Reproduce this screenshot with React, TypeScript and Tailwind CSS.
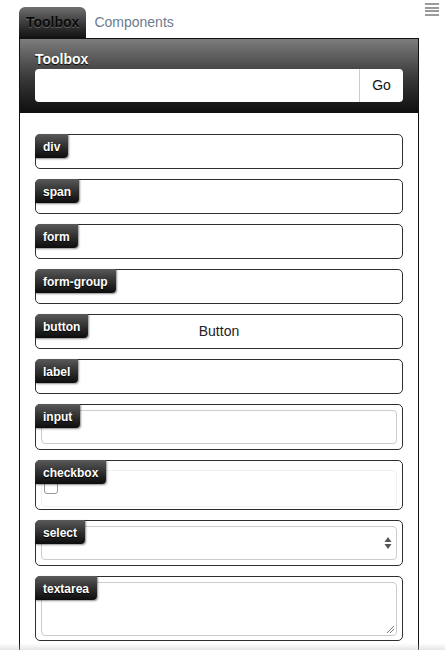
import type { ReactNode } from 'react'

const font = { fontFamily: '"Liberation Sans", Arial, sans-serif' }

function Badge({ children }: { children: ReactNode }) {
  return (
    <div className="absolute -left-px -top-px z-10 h-[24px] px-[8px] pt-[2px] rounded-tl-[5px] rounded-br-[4px] bg-gradient-to-b from-[#5a5a5a] to-[#0d0d0d] text-white text-[12px] font-bold leading-[22px] shadow-[1px_1px_2px_rgba(0,0,0,0.45)] [text-shadow:0_1px_1px_#000]">
      {children}
    </div>
  )
}

function Box({ label, className = 'h-[35px]', children }: { label: string; className?: string; children?: ReactNode }) {
  return (
    <div className={`relative border border-[#2e2e2e] rounded-[5px] bg-white ${className}`}>
      <Badge>{label}</Badge>
      {children}
    </div>
  )
}

export default function App() {
  return (
    <div className="relative min-h-[650px] bg-white text-[#222]" style={font}>
      {/* menu icon */}
      <div className="absolute right-[6px] top-[3px] flex flex-col gap-[1.5px]">
        <span className="block w-[14px] h-[2px] bg-[#9a9a9a]" />
        <span className="block w-[14px] h-[2px] bg-[#9a9a9a]" />
        <span className="block w-[14px] h-[2px] bg-[#9a9a9a]" />
        <span className="block w-[14px] h-[2.5px] bg-[#9a9a9a]" />
      </div>

      <div className="pl-[19px] pt-[7px] w-[419px]">
        {/* Tabs */}
        <div className="flex items-end h-[31px]">
          <div className="h-[31px] px-[7px] rounded-t-[6px] bg-gradient-to-b from-[#707070] to-[#111] text-[14px] font-bold leading-[30px] text-[#0a0a0a] [text-shadow:0_1px_0_rgba(255,255,255,0.25)]">
            Toolbox
          </div>
          <div className="h-[31px] px-[8px] text-[14px] leading-[30px] text-[#6c7b8d]">Components</div>
        </div>

        {/* Panel */}
        <div className="border border-[#111] border-b-0">
          <div className="bg-gradient-to-b from-[#7d7d7d] via-[#3c3c3c] to-[#0f0f0f] px-[15px] pt-[12px] pb-[11px]">
            <div className="text-white text-[14px] font-bold leading-[17px] [text-shadow:0_1px_1px_#000]">Toolbox</div>
            <div className="mt-[1px] flex h-[33px] bg-white rounded-[4px] overflow-hidden">
              <input className="flex-1 min-w-0 outline-none px-2 text-[14px]" />
              <div className="w-[44px] border-l border-[#ccc] flex items-center justify-center text-[14px] text-[#111]">Go</div>
            </div>
          </div>

          <div className="pl-[15px] pr-[15px] pt-[21px] pb-[20px] flex flex-col gap-[10px]">
            <Box label="div" />
            <Box label="span" />
            <Box label="form" />
            <Box label="form-group" />
            <Box label="button">
              <div className="h-full flex items-center justify-center text-[14px] text-[#222]">Button</div>
            </Box>
            <Box label="label" />
            <Box label="input" className="h-[46px] p-[5px]">
              <div className="h-[34px] border border-[#ccc] rounded-[4px]" />
            </Box>
            <Box label="checkbox" className="h-[50px] px-[5px] pt-[9px]">
              <div className="h-[37px] border border-[#f0f0f0] rounded-[4px] pl-[2px] pt-[10px]">
                <div className="w-[14px] h-[13px] border border-[#999] rounded-[3px] bg-white" />
              </div>
            </Box>
            <Box label="select" className="h-[46px] p-[5px]">
              <div className="h-[34px] border border-[#ccc] rounded-[4px] flex items-center justify-end pr-[4px]">
                <svg width="8" height="14" viewBox="0 0 8 14">
                  <path d="M4 1 L7.5 6 L0.5 6 Z" fill="#555" />
                  <path d="M4 13 L7.5 8 L0.5 8 Z" fill="#555" />
                </svg>
              </div>
            </Box>
            <Box label="textarea" className="h-[65px] p-[5px]">
              <div className="relative h-[54px] border border-[#ccc] rounded-[4px]">
                <svg className="absolute right-[2px] bottom-[2px]" width="8" height="8" viewBox="0 0 8 8">
                  <path d="M1 8 L8 1 M4 8 L8 4" stroke="#777" strokeWidth="1" />
                </svg>
              </div>
            </Box>
          </div>
        </div>
      </div>

      {/* bottom fade */}
      <div className="fixed left-0 right-0 bottom-0 h-[7px] bg-gradient-to-b from-transparent to-[rgba(200,200,200,0.45)]" />
    </div>
  )
}
